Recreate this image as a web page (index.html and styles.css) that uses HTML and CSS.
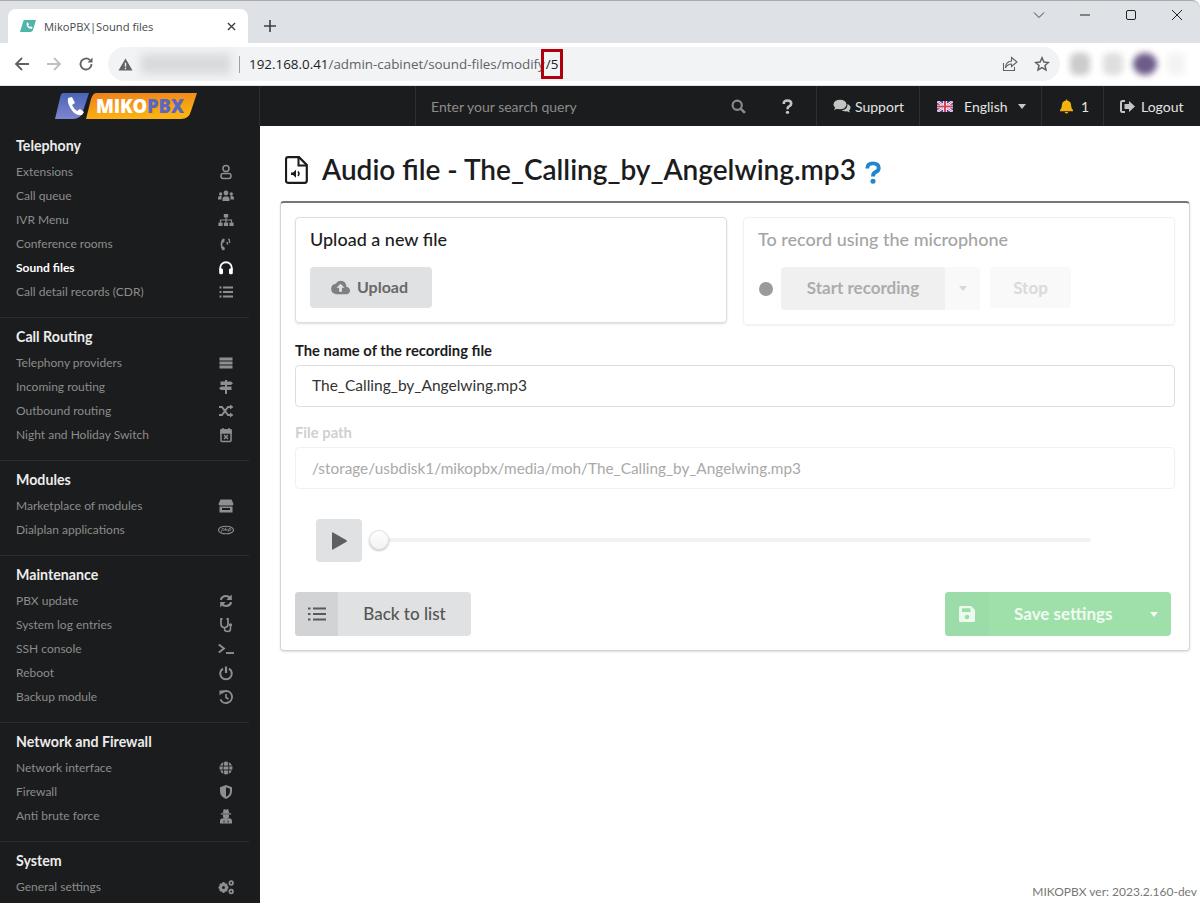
FILE: index.html
```html
<!DOCTYPE html>
<html lang="en">
<head>
<meta charset="utf-8">
<title>MikoPBX|Sound files</title>
<link rel="stylesheet" href="styles.css">
</head>
<body>
<div class="tabstrip">
  <div class="tab">
    <svg class="favicon" viewBox="0 0 16 16"><path d="M4.500 2H16l-3 10q-.6 2-2.500 2H0L3 4q.4-2 1.500-2z" fill="#4fb5a8"/><path d="M6.500 4.500l1.500 0 1 2-1 .8q.7 1.300 2 1.800l1-.8 1.500 1-.5 1.400q-3 .5-5-2.500-1-2 0-3.700z" fill="#fff"/></svg>
    <span class="tab-title">MikoPBX|Sound files</span>
    <svg class="tab-close" viewBox="0 0 10 10"><path d="M1 1l8 8M9 1l-8 8" stroke="#3c4043" stroke-width="1.500"/></svg>
  </div>
  <svg class="new-tab" viewBox="0 0 12 12"><path d="M6 0v12M0 6h12" stroke="#3c4043" stroke-width="1.600"/></svg>
  <div class="window-controls">
    <svg class="win-icon" viewBox="0 0 12 12"><path d="M1 3.500l5 5 5-5" fill="none" stroke="#3c4043" stroke-width="1"/></svg>
    <svg class="win-icon" viewBox="0 0 12 12"><path d="M1 6h10" stroke="#222" stroke-width="1"/></svg>
    <svg class="win-icon" viewBox="0 0 12 12"><rect x="1.500" y="1.500" width="9" height="9" rx="1.500" fill="none" stroke="#222"/></svg>
    <svg class="win-icon" viewBox="0 0 12 12"><path d="M1 1l10 10M11 1L1 11" stroke="#222" stroke-width="1"/></svg>
  </div>
</div>
<div class="toolbar">
  <svg class="nav-icon" viewBox="0 0 16 16"><path d="M15 8H2M8 2L2 8l6 6" fill="none" stroke="#5f6368" stroke-width="1.800"/></svg>
  <svg class="nav-icon" viewBox="0 0 16 16"><path d="M1 8h13M8 2l6 6-6 6" fill="none" stroke="#bdc1c6" stroke-width="1.800"/></svg>
  <svg class="nav-icon" viewBox="0 0 16 16"><path d="M13.500 8a5.500 5.500 0 1 1-1.600-3.900" fill="none" stroke="#5f6368" stroke-width="1.800"/><path d="M14.500 1.500v5h-5z" fill="#5f6368"/></svg>
  <div class="omnibox">
    <svg class="warn" viewBox="0 0 16 16"><path d="M8 1.500L15.500 14.500H.5z" fill="#5f6368"/><path d="M8 6v4.500M8 11.500v1.500" stroke="#f1f3f4" stroke-width="1.500"/></svg>
    <span class="blur-host"></span>
    <span class="omni-sep"></span>
    <span class="url"><span class="url-host">192.168.0.41</span>/admin-cabinet/sound-files/modify<span class="url-mark">/5</span></span>
    <svg class="omni-action" viewBox="0 0 16 16"><path d="M1.500 7v7.500h11V11" fill="none" stroke="#5f6368" stroke-width="1.100"/><path d="M9.500 1.500L15 6l-5.500 4.500V8C7 8 5 9 3.500 12c0-4 2-6.500 6-7z" fill="none" stroke="#5f6368" stroke-width="1.100"/></svg>
    <svg class="omni-action" viewBox="0 0 16 16"><path d="M8 1.800l1.900 4.200 4.500.5-3.400 3 1 4.500L8 11.700 4 14l1-4.500-3.400-3 4.500-.5z" fill="none" stroke="#5f6368" stroke-width="1.500"/></svg>
  </div>
  <div class="extensions">
    <span class="ext ext-a"></span><span class="ext ext-b"></span><span class="ext ext-c"></span><span class="ext ext-d"></span>
  </div>
</div>
<div class="chrome-line"></div>

<header class="topbar">
  <div class="brand">
    <svg class="logo" viewBox="0 0 142 26">
      <defs>
        <linearGradient id="lgOrange" x1="0" y1="0" x2="0.300" y2="1"><stop offset="0" stop-color="#ee7f1c"/><stop offset="1" stop-color="#fbb313"/></linearGradient>
        <linearGradient id="lgBlue" x1="0" y1="0" x2="0" y2="1"><stop offset="0" stop-color="#4a63b8"/><stop offset="1" stop-color="#7e86cf"/></linearGradient>
      </defs>
      <path d="M8 0H34L28 18Q26 26 18 26H0L5 5Q6 0 8 0Z" fill="url(#lgBlue)"/>
      <path d="M13 5l4-1 3 6-3 2q2 4 5 6l3-2 4 3-2 3q-7 1-11-6-4-6-3-11z" fill="#fff"/>
      <path d="M41 0H142L136 18Q134 26 126 26H31L36 6Q38 0 41 0Z" fill="url(#lgOrange)"/>
      <text class="logo-text" x="41" y="20">MIKO<tspan class="logo-pbx">PBX</tspan></text>
    </svg>
  </div>
  <div class="search-cell">
    <span class="search-text">Enter your search query</span>
    <svg class="head-icon search-icon" viewBox="0 0 14 14"><circle cx="5.800" cy="5.800" r="4.300" fill="none" stroke="#8a8a8a" stroke-width="2"/><path d="M9 9l4 4" stroke="#8a8a8a" stroke-width="2.400"/></svg>
    <svg class="help-mark" viewBox="0 0 14 20"><path d="M2 6.500Q2 2 7 2t5 4q0 2.500-2.500 3.500Q7 10.500 7 13.500" fill="none" stroke="#c4c4c4" stroke-width="3.400"/><circle cx="7" cy="17.700" r="2.200" fill="#c4c4c4"/></svg>
  </div>
  <div class="head-cell cell-support">
    <svg class="head-icon support-icon" viewBox="0 0 18 14"><ellipse cx="7" cy="5.500" rx="6.500" ry="4.800" fill="#c4c4c4"/><path d="M2.500 8l-1.500 3 4-1.500z" fill="#c4c4c4"/><path d="M14 5q3.500 1 3.500 3.800 0 1.700-1.500 2.700l1 2-3-1.200q-3.500.4-5.500-1.300 6 0 6-6z" fill="#c4c4c4"/></svg>
    <span>Support</span>
  </div>
  <div class="head-cell cell-lang">
    <svg class="flag" viewBox="0 0 16 11"><rect width="16" height="11" fill="#3b4a9c"/><path d="M0 0l16 11M16 0L0 11" stroke="#fff" stroke-width="2.400"/><path d="M0 0l16 11M16 0L0 11" stroke="#d8415a" stroke-width=".8"/><path d="M8 0v11M0 5.500h16" stroke="#fff" stroke-width="3.600"/><path d="M8 0v11M0 5.500h16" stroke="#d8415a" stroke-width="2"/></svg>
    <span>English</span>
    <span class="caret caret-light"></span>
  </div>
  <div class="head-cell cell-bell">
    <svg class="head-icon bell-icon" viewBox="0 0 14 15"><path d="M7 0q1 0 1 1.200 4 .8 4 5.300 0 3 2 5v1H0v-1q2-2 2-5 0-4.500 4-5.300Q6 0 7 0z" fill="#f2b20f"/><path d="M5 13.500h4q-.3 1.500-2 1.500t-2-1.500z" fill="#f2b20f"/></svg>
    <span>1</span>
  </div>
  <div class="head-cell cell-logout">
    <svg class="head-icon logout-icon" viewBox="0 0 15 13"><path d="M5 1H2.500Q1 1 1 2.500v8Q1 12 2.500 12H5" fill="none" stroke="#c4c4c4" stroke-width="2"/><path d="M9 1l6 5.500L9 12V9H4.500V4H9z" fill="#c4c4c4"/></svg>
    <span>Logout</span>
  </div>
</header>

<div class="app">
  <nav class="sidebar">
    <section class="nav-section">
      <h4 class="nav-heading">Telephony</h4>
      <a class="nav-item"><span>Extensions</span><svg class="nav-ico" viewBox="0 0 16 16"><circle cx="8" cy="4.500" r="3" fill="none" stroke="#8f8f8f" stroke-width="1.500"/><rect x="3" y="9.500" width="10" height="5" rx="2.200" fill="none" stroke="#8f8f8f" stroke-width="1.500"/></svg></a>
      <a class="nav-item"><span>Call queue</span><svg class="nav-ico" viewBox="0 0 16 16"><circle cx="8" cy="5" r="2.400" fill="#8f8f8f"/><circle cx="2.700" cy="6" r="1.700" fill="#8f8f8f"/><circle cx="13.300" cy="6" r="1.700" fill="#8f8f8f"/><path d="M4.500 13v-2q0-2.500 2-2.500h3q2 0 2 2.500v2z" fill="#8f8f8f"/><path d="M0 11.500V10q0-2 2-2h1.500L3.500 11.500zM16 11.500V10q0-2-2-2h-1.500l0 3.500z" fill="#8f8f8f"/></svg></a>
      <a class="nav-item"><span>IVR Menu</span><svg class="nav-ico" viewBox="0 0 16 16"><rect x="5.800" y="2" width="4.400" height="3.600" rx=".6" fill="#8f8f8f"/><rect x=".4" y="10.500" width="4.200" height="3.500" rx=".6" fill="#8f8f8f"/><rect x="5.900" y="10.500" width="4.200" height="3.500" rx=".6" fill="#8f8f8f"/><rect x="11.400" y="10.500" width="4.200" height="3.500" rx=".6" fill="#8f8f8f"/><path d="M8 5.500v5M2.500 10.500V8h11v2.500" fill="none" stroke="#8f8f8f" stroke-width="1.200"/></svg></a>
      <a class="nav-item"><span>Conference rooms</span><svg class="nav-ico" viewBox="0 0 16 16"><path d="M6.800 3.300L4.800 2.600Q2.600 5 2.600 8.500t2.200 5.900l2.200-.9-.9-3-1.400.2q-.6-2.200 0-4.300l1.400.2z" fill="#8f8f8f"/><path d="M8.600 6.200q1.200.8.800 2.400M10.500 2.800q1.700 1.600 1 4.200" fill="none" stroke="#8f8f8f" stroke-width="1.500"/></svg></a>
      <a class="nav-item is-active"><span>Sound files</span><svg class="nav-ico" viewBox="0 0 16 16"><path d="M2.200 10V8a5.800 5.800 0 0 1 11.600 0v2" fill="none" stroke="#fff" stroke-width="1.900"/><rect x="1.200" y="8.500" width="3.800" height="5.800" rx="1.400" fill="#fff"/><rect x="11" y="8.500" width="3.800" height="5.800" rx="1.400" fill="#fff"/></svg></a>
      <a class="nav-item"><span>Call detail records (CDR)</span><svg class="nav-ico" viewBox="0 0 16 16"><path d="M5 3.500h10M5 8h10M5 12.500h10" stroke="#8f8f8f" stroke-width="1.800"/><path d="M1.500 3.500h2M1.500 8h2M1.500 12.500h2" stroke="#8f8f8f" stroke-width="1.800"/></svg></a>
    </section>
    <section class="nav-section">
      <h4 class="nav-heading">Call Routing</h4>
      <a class="nav-item"><span>Telephony providers</span><svg class="nav-ico" viewBox="0 0 16 16"><rect x="1.500" y="2.500" width="13" height="3" fill="#8f8f8f"/><rect x="1.500" y="6.500" width="13" height="3" fill="#8f8f8f"/><rect x="1.500" y="10.500" width="13" height="3" fill="#8f8f8f"/></svg></a>
      <a class="nav-item"><span>Incoming routing</span><svg class="nav-ico" viewBox="0 0 16 16"><path d="M7 1h2v14H7z" fill="#8f8f8f"/><path d="M2.500 2.500h10.500l2 1.800-2 1.800H2.500zM13.500 7.500H3L1 9.300 3 11h10.500z" fill="#8f8f8f"/></svg></a>
      <a class="nav-item"><span>Outbound routing</span><svg class="nav-ico" viewBox="0 0 16 16"><path d="M1 4h3l6 8h2M1 12h3l6-8h2" fill="none" stroke="#8f8f8f" stroke-width="1.900"/><path d="M12 1.500L15.500 4 12 6.500zM12 9.500l3.500 2.500-3.500 2.500z" fill="#8f8f8f"/></svg></a>
      <a class="nav-item"><span>Night and Holiday Switch</span><svg class="nav-ico" viewBox="0 0 16 16"><rect x="3" y="3" width="10" height="11.500" rx="1" fill="none" stroke="#8f8f8f" stroke-width="1.500"/><path d="M3 3h10v3H3zM5 1v2M11 1v2" stroke="#8f8f8f" stroke-width="1.500" fill="#8f8f8f"/><path d="M6 8l4 4M10 8l-4 4" stroke="#8f8f8f" stroke-width="1.500"/></svg></a>
    </section>
    <section class="nav-section">
      <h4 class="nav-heading">Modules</h4>
      <a class="nav-item"><span>Marketplace of modules</span><svg class="nav-ico" viewBox="0 0 16 16"><path d="M2.500 1.500h11L15.500 6q0 1.500-2 1.500h-11q-2 0-2-1.500z" fill="#8f8f8f"/><path d="M1.500 8.500h13v6h-13zM4 10v2h8v-2z" fill="#8f8f8f" fill-rule="evenodd"/></svg></a>
      <a class="nav-item"><span>Dialplan applications</span><svg class="nav-ico" viewBox="0 0 16 16"><ellipse cx="8" cy="8" rx="7.500" ry="3.800" fill="none" stroke="#8f8f8f" stroke-width="1.100"/><path d="M3.500 9.800l.8-3.300h1.500q1 .3.500 1.300-.5.700-1.800.6M7 9l.8-3.500M7.400 7.500h1.800l-.4 1.600M10.200 9.800l.8-3.300h1.400q1 .3.500 1.300-.5.700-1.800.6" fill="none" stroke="#8f8f8f" stroke-width=".8"/></svg></a>
    </section>
    <section class="nav-section">
      <h4 class="nav-heading">Maintenance</h4>
      <a class="nav-item"><span>PBX update</span><svg class="nav-ico" viewBox="0 0 16 16"><path d="M2.800 6.800Q4 3 8 3q2.500 0 4 2M13.200 9.200Q12 13 8 13q-2.500 0-4-2" fill="none" stroke="#8f8f8f" stroke-width="2.200"/><path d="M13.800 1.500V7H8.300zM2.200 14.500V9h5.500z" fill="#8f8f8f"/></svg></a>
      <a class="nav-item"><span>System log entries</span><svg class="nav-ico" viewBox="0 0 16 16"><path d="M4.500 1.800H3v5q0 3.700 3.500 3.700T10 6.800v-5H8.500" fill="none" stroke="#8f8f8f" stroke-width="1.700"/><path d="M6.500 10.500v1.500q0 2.500 3 2.500t3-2.500V9.500" fill="none" stroke="#8f8f8f" stroke-width="1.500"/><circle cx="12.500" cy="8" r="1.700" fill="#8f8f8f"/></svg></a>
      <a class="nav-item"><span>SSH console</span><svg class="nav-ico" viewBox="0 0 16 16"><path d="M.8 3.500L6 7.500l-5.200 4" fill="none" stroke="#8f8f8f" stroke-width="1.900"/><path d="M8 12h8" stroke="#8f8f8f" stroke-width="1.900"/></svg></a>
      <a class="nav-item"><span>Reboot</span><svg class="nav-ico" viewBox="0 0 16 16"><path d="M5 3.600a5.800 5.800 0 1 0 6 0" fill="none" stroke="#8f8f8f" stroke-width="2"/><path d="M8 1.500v6.500" stroke="#8f8f8f" stroke-width="2.200"/></svg></a>
      <a class="nav-item"><span>Backup module</span><svg class="nav-ico" viewBox="0 0 16 16"><path d="M3.500 4Q5.500 2 8 2a6 6 0 1 1-5.500 8.300" fill="none" stroke="#8f8f8f" stroke-width="1.900"/><path d="M1.500 1.500h5L1.500 6.500z" fill="#8f8f8f"/><path d="M8 5v3.500l2.500 1.500" fill="none" stroke="#8f8f8f" stroke-width="1.600"/></svg></a>
    </section>
    <section class="nav-section">
      <h4 class="nav-heading">Network and Firewall</h4>
      <a class="nav-item"><span>Network interface</span><svg class="nav-ico" viewBox="0 0 16 16"><circle cx="8" cy="8" r="6.500" fill="#8f8f8f"/><path d="M1.500 6h13M1.500 10h13M5.800 1.800q-1.500 6.200 0 12.400M10.200 1.800q1.500 6.200 0 12.400" fill="none" stroke="#1b1c1d" stroke-width=".9"/></svg></a>
      <a class="nav-item"><span>Firewall</span><svg class="nav-ico" viewBox="0 0 16 16"><path d="M8 1l6 2.300v3.700Q14 12.500 8 15 2 12.500 2 7V3.300z" fill="#8f8f8f"/><path d="M8 3.200l4 1.500V7q0 4-4 5.800z" fill="#1b1c1d"/></svg></a>
      <a class="nav-item"><span>Anti brute force</span><svg class="nav-ico" viewBox="0 0 16 16"><path d="M4.800 5l1-4 2.200.7L10.200 1l1 4zM2.800 5.300h10.400v1.200H2.800z" fill="#8f8f8f"/><path d="M5 6.500h6v2.500q-.5 1.800-3 1.800T5 9z" fill="#8f8f8f"/><path d="M2 15.500v-2.500q0-2.500 3-2.800h6q3 .3 3 2.800v2.500z" fill="#8f8f8f"/><path d="M6 12.500v2M10 12.500v2" stroke="#1b1c1d" stroke-width=".9"/></svg></a>
    </section>
    <section class="nav-section">
      <h4 class="nav-heading">System</h4>
      <a class="nav-item"><span>General settings</span><svg class="nav-ico" viewBox="0 0 16 16"><circle cx="5.500" cy="8.500" r="3" fill="none" stroke="#8f8f8f" stroke-width="3"/><path d="M5.500 3v2M5.500 12v2M.5 8.500h2M8.500 8.500h2M2 5l1.400 1.400M7.600 10.600L9 12M2 12l1.400-1.400M7.600 6.400L9 5" stroke="#8f8f8f" stroke-width="2"/><circle cx="13.200" cy="4" r="1.800" fill="none" stroke="#8f8f8f" stroke-width="1.700"/><circle cx="13.200" cy="12.500" r="1.800" fill="none" stroke="#8f8f8f" stroke-width="1.700"/></svg></a>
    </section>
  </nav>

  <main class="main">
    <div class="page-title">
      <svg class="title-icon" viewBox="0 0 23 28"><path d="M3 1.200h11l7.800 7.800v15.800q0 2-2 2H3q-2 0-2-2V3.200q0-2 2-2z" fill="none" stroke="#1b1c1d" stroke-width="2.200"/><path d="M13.500 1.500v8h8" fill="none" stroke="#1b1c1d" stroke-width="2"/><path d="M6 16.500h2l3-2.800v8l-3-2.800H6z" fill="#1b1c1d"/><path d="M13 15.500q2 2.200 0 4.500" fill="none" stroke="#1b1c1d" stroke-width="1.500"/></svg>
      <h1 class="title-text">Audio file - The_Calling_by_Angelwing.mp3</h1>
      <svg class="title-help" viewBox="0 0 14 20"><path d="M2 6.500Q2 2 7 2t5 4q0 2.500-2.500 3.500Q7 10.500 7 13.500" fill="none" stroke="#2185d0" stroke-width="3.400"/><circle cx="7" cy="17.700" r="2.200" fill="#2185d0"/></svg>
    </div>

    <form class="segment">
      <div class="cards">
        <div class="card">
          <div class="card-title">Upload a new file</div>
          <button type="button" class="btn btn-upload">
            <svg class="btn-ico" viewBox="0 0 20 15"><path d="M16.200 6.600Q16 1 10.500.4 7 .2 5 3.500 1 4 .2 8q-.5 6 5.300 6.600H16q4-.5 4-4 0-3-3.800-4z" fill="#808080"/><path d="M10 3.500l4.200 4.200h-2.700v4.300h-3V7.700H5.800z" fill="#e0e1e2"/></svg>
            <span class="btn-text">Upload</span>
          </button>
        </div>
        <div class="card card-disabled">
          <div class="card-title">To record using the microphone</div>
          <div class="rec-row">
            <span class="rec-dot"></span>
            <div class="rec-group">
              <span class="rec-start">Start recording</span>
              <span class="rec-caret"><span class="caret caret-faint"></span></span>
            </div>
            <span class="rec-stop">Stop</span>
          </div>
        </div>
      </div>

      <div class="field">
        <label class="field-label">The name of the recording file</label>
        <div class="input">The_Calling_by_Angelwing.mp3</div>
      </div>
      <div class="field">
        <label class="field-label label-disabled">File path</label>
        <div class="input input-disabled">/storage/usbdisk1/mikopbx/media/moh/The_Calling_by_Angelwing.mp3</div>
      </div>

      <div class="player">
        <span class="play-btn"><svg class="play-ico" viewBox="0 0 15 18"><path d="M0 1q0-1 1-.6l13.500 7.800q.8.800 0 1.600L1 17.600Q0 18 0 17z" fill="#5f5f5f"/></svg></span>
        <div class="slider"><span class="thumb"></span></div>
      </div>

      <div class="actions">
        <div class="btn-labeled btn-back">
          <span class="back-ico"><svg class="list-ico" viewBox="0 0 18 14"><path d="M5 1.500h13M5 7h13M5 12.500h13" stroke="#5a5a5a" stroke-width="1.800"/><path d="M0 1.500h2.500M0 7h2.500M0 12.500h2.500" stroke="#5a5a5a" stroke-width="2.200"/></svg></span>
          <span class="back-text">Back to list</span>
        </div>
        <div class="btn-labeled btn-save">
          <span class="save-ico"><svg class="floppy" viewBox="0 0 16 16"><path d="M1.500 0H12l4 4v10.500q0 1.500-1.500 1.500h-13Q0 16 0 14.500v-13Q0 0 1.500 0z" fill="#ecf9ee"/><rect x="3" y="2.300" width="8.500" height="3.700" fill="#9cdca8"/><circle cx="8" cy="11" r="2.300" fill="#9cdca8"/></svg></span>
          <span class="save-text">Save settings</span>
          <span class="caret caret-white"></span>
        </div>
      </div>
    </form>
    <div class="version">MIKOPBX ver: 2023.2.160-dev</div>
  </main>
</div>
</body>
</html>
```
FILE: styles.css
```css
* { box-sizing: border-box; }
html, body { margin: 0; padding: 0; height: 903px; overflow: hidden; background: #fff; }
body { font-family: "Lato", "Liberation Sans", sans-serif; font-size: 14px; color: #1b1c1d; }

/* browser chrome */
.tabstrip { height: 43px; background: #dee1e6; border-top: 1px solid #a9a9a9; border-top-right-radius: 8px; display: flex; align-items: flex-end; font-family: "Open Sans", "Noto Sans", sans-serif; }
.tab { width: 240px; height: 34px; margin-left: 8px; background: #fff; border-radius: 8px 8px 0 0; display: flex; align-items: center; padding: 0 12px; }
.favicon { width: 16px; height: 16px; margin-right: 8px; }
.tab-title { flex: 1; font-size: 11.200px; color: #45494d; white-space: nowrap; }
.tab-close { width: 9px; height: 9px; margin-right: 0; }
.new-tab { width: 12px; height: 12px; margin: 0 0 11px 16px; }
.window-controls { margin-left: auto; align-self: flex-start; display: flex; }
.win-icon { width: 46px; height: 12px; margin-top: 8px; }
.toolbar { height: 42px; background: #fff; display: flex; align-items: center; padding: 0 0 0 14px; font-family: "Open Sans", "Noto Sans", sans-serif; }
.nav-icon { width: 16px; height: 16px; margin-right: 16px; }
.omnibox { margin-left: -2px; width: 952px; height: 34px; background: #f1f3f4; border-radius: 17px; display: flex; align-items: center; padding: 0 10px 0 10px; }
.warn { width: 15px; height: 15px; flex: none; }
.blur-host { width: 90px; height: 20px; margin-left: 8px; background: #d9dadb; filter: blur(4px); flex: none; }
.omni-sep { width: 1px; height: 17px; background: #9aa0a6; margin-left: 8px; flex: none; }
.url { margin-left: 9px; font-size: 13.400px; color: #5f6368; white-space: nowrap; flex: 1; }
.url-host { color: #202124; }
.url-mark { color: #202124; margin-left: 1px; padding: 1px 0; outline: 3px solid #b0000f; outline-offset: 2px; }
.omni-action { width: 16px; height: 16px; margin-left: 16px; flex: none; }
.extensions { margin-left: 10px; display: flex; align-items: center; }
.ext { display: block; height: 22px; border-radius: 6px; filter: blur(3px); }
.ext-a { width: 20px; background: #cbcbcb; margin-right: 13px; }
.ext-b { width: 20px; background: #dedede; margin-right: 10px; }
.ext-c { width: 24px; background: #6c5a88; border-radius: 50%; margin-right: 10px; }
.ext-d { width: 18px; background: #f3f3f3; }
.chrome-line { height: 1px; background: #e4e4e4; }

/* header */
.topbar { height: 40px; background: #1b1c1d; display: flex; color: #e3e3e3; }
.brand { width: 260px; border-right: 1px solid #2e2f30; padding: 7px 0 0 55px; flex: none; }
.logo { display: block; width: 142px; height: 26px; }
.logo-text { font-family: "Open Sans", "Liberation Sans", sans-serif; font-weight: 800; font-size: 18.500px; fill: #fff; letter-spacing: -.2px; }
.logo-pbx { fill: #5a67c4; }
.search-cell { width: 401px; margin-left: 155px; border-left: 1px solid #2e2f30; display: flex; align-items: center; flex: none; padding-left: 15px; }
.search-text { color: #8c8c8c; font-size: 14px; width: 300px; }
.search-icon { width: 15px; height: 15px; }
.help-mark { width: 11px; height: 15px; margin-left: 36px; }
.head-cell { border-left: 1px solid #2e2f30; display: flex; align-items: center; flex: none; font-size: 14px; }
.cell-support { width: 103px; padding-left: 16px; }
.support-icon { width: 18px; height: 14px; margin-right: 4px; }
.cell-lang { width: 122px; padding-left: 17px; }
.flag { width: 16px; height: 11px; margin-right: 11px; }
.caret { width: 0; height: 0; border-left: 4.500px solid transparent; border-right: 4.500px solid transparent; border-top: 5px solid currentColor; display: block; }
.caret-light { color: #c8c8c8; margin-left: 10px; }
.cell-bell { width: 62px; padding-left: 18px; }
.bell-icon { width: 13px; height: 15px; margin-right: 8px; }
.cell-logout { flex: 1; padding-left: 16px; }
.logout-icon { width: 15px; height: 13px; margin-right: 6px; }

/* layout */
.app { display: flex; height: 777px; }
.sidebar { width: 260px; background: #1b1c1d; flex: none; overflow: hidden; }
.nav-section { width: 249px; padding: 9px 15px 13px 16px; border-bottom: 1px solid #2c2d2e; }
.nav-section:first-child { padding-top: 10px; }
.nav-section:last-child { border-bottom: none; }
.nav-heading { margin: 0 0 4px; height: 20px; line-height: 20px; font-size: 14.200px; font-weight: 700; color: #ececec; }
.nav-item { height: 24px; display: flex; align-items: center; justify-content: space-between; font-size: 12px; color: #8c8c8c; white-space: nowrap; }
.nav-item span { padding-bottom: 2px; }
.nav-item.is-active { color: #fff; font-weight: 700; }
.nav-ico { width: 16px; height: 16px; flex: none; }

/* main */
.main { flex: 1; padding: 24px 10px 0 20px; position: relative; min-width: 0; }
.page-title { height: 40px; display: flex; align-items: center; padding-left: 5px; margin-bottom: 11px; }
.title-icon { width: 23px; height: 28px; flex: none; }
.title-text { margin: 0 0 2px 14px; font-size: 28px; font-weight: 600; line-height: 38px; color: #1b1c1d; white-space: nowrap; }
.title-help { width: 16px; height: 23px; margin: 4px 0 0 9px; flex: none; }

.segment { display: block; height: 450px; border: 1px solid #d4d4d5; border-top: 2px solid #767676; border-radius: 4px; box-shadow: 0 1px 2px rgba(34,36,38,.15); padding: 14px; }
.cards { display: flex; align-items: flex-start; gap: 16px; }
.card { flex: 1; border: 1px solid #dededf; border-radius: 4px; box-shadow: 0 1px 2px rgba(34,36,38,.15); padding: 12px 14px 14px; }
.card-title { font-size: 18px; line-height: 18px; font-weight: 500; margin-bottom: 19px; color: #1b1c1d; }
.btn { border: none; font: inherit; display: flex; align-items: center; justify-content: center; }
.btn-upload { width: 122px; height: 41px; padding: 0 3px 0 0; background: #e0e1e2; border-radius: 4px; font-size: 16px; font-weight: 700; color: #686868; }
.btn-text { padding-bottom: 2px; }
.btn-ico { width: 19px; height: 15px; margin-right: 7px; }

.card-disabled { border-color: #f1f1f1; box-shadow: 0 1px 2px rgba(34,36,38,.06); height: 108px; }
.card-disabled .card-title { color: #a4a4a4; }
.rec-row { display: flex; align-items: flex-start; }
.rec-dot { width: 14px; height: 14px; border-radius: 50%; background: #9b9b9b; margin: 15px 8px 0 1px; }
.rec-group { display: flex; height: 43px; }
.rec-start { width: 164px; background: #f0f0f0; border-radius: 4px 0 0 4px; color: #acacac; font-weight: 700; font-size: 17px; padding-bottom: 2px; display: flex; align-items: center; justify-content: center; }
.rec-caret { width: 35px; background: #f9f9f9; border-radius: 0 4px 4px 0; display: flex; align-items: center; justify-content: center; }
.caret-faint { color: #d8d8d8; }
.rec-stop { width: 81px; height: 41px; margin-left: 10px; background: #f9f9f9; border-radius: 4px; color: #dadada; font-weight: 700; font-size: 17px; display: flex; align-items: center; justify-content: center; }

.field { margin-top: 17px; }
.field-label { display: block; height: 18px; line-height: 16px; margin-bottom: 5px; font-size: 14.800px; font-weight: 700; color: #1b1c1d; }
.label-disabled { color: #d0d0d0; }
.input { height: 42px; border: 1px solid #dededf; border-radius: 4px; padding: 0 16px; font-size: 15.500px; line-height: 38px; color: #333; }
.input-disabled { border-color: #f1f1f1; color: #a9a9a9; font-size: 15.350px; line-height: 40px; }

.player { margin-top: 30px; display: flex; align-items: center; padding-left: 21px; }
.play-btn { width: 46px; height: 43px; background: #e0e1e2; border-radius: 4px; display: flex; align-items: center; justify-content: center; flex: none; }
.play-ico { width: 15px; height: 18px; }
.slider { width: 722px; height: 4px; margin: -2px 0 0 7px; background: #f1f1f1; border-radius: 2px; position: relative; }
.thumb { position: absolute; left: 0; top: -8px; width: 20px; height: 20px; border-radius: 50%; background: linear-gradient(#fff, #f2f2f2); box-shadow: 0 1px 2px rgba(34,36,38,.3), 0 0 0 1px rgba(34,36,38,.12) inset; }

.actions { margin-top: 30px; margin-right: 4px; display: flex; justify-content: space-between; }
.btn-labeled { height: 44px; border-radius: 4px; display: flex; align-items: center; overflow: hidden; font-weight: 700; }
.btn-back { width: 176px; background: #e0e1e2; }
.back-ico { width: 43px; height: 44px; background: #d2d3d4; display: flex; align-items: center; justify-content: center; flex: none; }
.list-ico { width: 18px; height: 14px; }
.back-text { flex: 1; text-align: center; font-size: 17px; font-weight: 500; color: #555; padding-bottom: 2px; }
.btn-save { width: 226px; background: #9fe0aa; color: #fff; }
.save-ico { width: 44px; height: 44px; background: #9cdca8; display: flex; align-items: center; justify-content: center; flex: none; }
.floppy { width: 16px; height: 16px; }
.save-text { margin-left: 25px; font-size: 17px; font-weight: 700; color: #f0fbf2; padding-bottom: 2px; }
.caret-white { margin-left: auto; margin-right: 13px; color: #f4fbf5; }

.version { position: absolute; right: 3px; bottom: 4px; font-size: 12px; color: #777; }
```
